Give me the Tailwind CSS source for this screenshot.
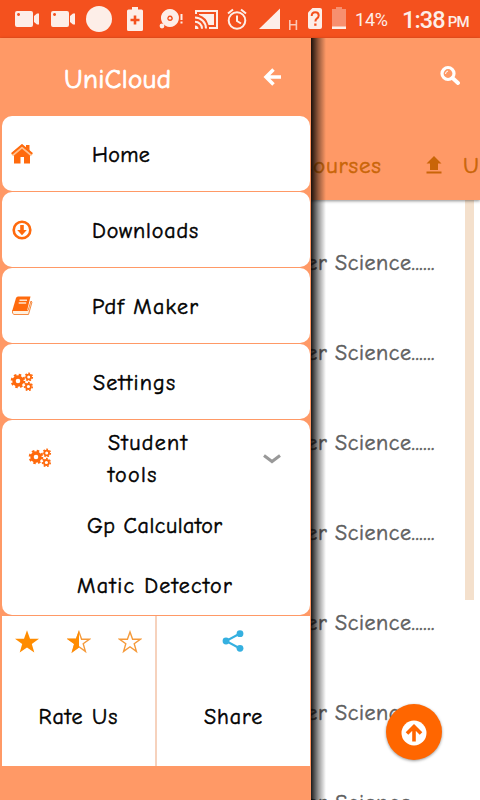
<!DOCTYPE html>
<html lang="en">
<head>
<meta charset="utf-8">
<title>UniCloud</title>
<script src="https://cdn.jsdelivr.net/npm/@tailwindcss/browser@4"></script>
</head>
<body class="relative w-[480px] h-[800px] overflow-hidden bg-white font-['Comic_Sans_MS','Comic_Neue',Lato,sans-serif] [font-variant-ligatures:none]">
<svg class="hidden">
  <defs>
    <symbol id="cam" viewBox="0 0 24 16"><path fill-rule="evenodd" d="M2 0H16Q18 0 18 2V14Q18 16 16 16H2Q0 16 0 14V2Q0 0 2 0ZM3.500 2a1.500 1.500 0 1 0 .1 0ZM19 5l3-2.500h2v11h-2L19 11Z"/></symbol>
    <symbol id="gears" viewBox="0 0 24 20">
      <g fill="none" stroke="#ff6a0d">
        <circle cx="8" cy="9" r="4" stroke-width="3.400"/>
        <circle cx="8" cy="9" r="6.200" stroke-width="2.200" stroke-dasharray="2.500 2.370"/>
        <circle cx="18.700" cy="5" r="2.400" stroke-width="1.800"/>
        <circle cx="18.700" cy="5" r="3.700" stroke-width="1.400" stroke-dasharray="1.700 1.621"/>
        <circle cx="18.400" cy="14.500" r="2.500" stroke-width="1.800"/>
        <circle cx="18.400" cy="14.500" r="3.900" stroke-width="1.500" stroke-dasharray="1.800 1.700"/>
      </g>
    </symbol>
  </defs>
</svg>
<div class="flex h-full flex-col">
  <header class="flex h-[38px] shrink-0 items-center bg-[#f4511e] text-[#fdeee8] font-[Roboto,sans-serif]">
    <svg class="h-[38px] w-[352px] shrink-0" viewBox="0 0 352 38" fill="#fdeee8">
      <use href="#cam" x="15" y="11" width="24" height="16"/>
      <use href="#cam" x="51" y="11" width="24" height="16"/>
      <circle cx="99" cy="19" r="13"/>
      <path fill-rule="evenodd" d="M132 7h6v2.500h3.500q1.500 0 1.500 1.500v18.500q0 1.500-1.500 1.500h-13q-1.500 0-1.500-1.500V11q0-1.500 1.500-1.500h3.500ZM133.700 15.500v3.200h-3.200v2.600h3.200v3.200h2.600v-3.200h3.200v-2.600h-3.200v-3.200Z"/>
      <path fill-rule="evenodd" d="M170 9a9 9 0 1 1-.1 0ZM170 15.500a2.800 2.800 0 1 0 .1 0Z"/>
      <circle cx="170" cy="18.300" r="1.300"/><circle cx="162" cy="26" r="2.400"/>
      <path d="M180.500 14h2v6h-2ZM180.500 21.500h2v2h-2Z"/>
      <g fill="none" stroke="#fdeee8" stroke-width="2">
        <path d="M196 14V11h21v17h-8M195 17.500a11 11 0 0 1 11 11M195 21.700a7 7 0 0 1 7 7"/>
      </g>
      <path d="M199 14h15v11h-5.500A14 14 0 0 0 199 15ZM195 25.500a3.500 3.500 0 0 1 3.500 3.500H195Z"/>
      <g fill="none" stroke="#fdeee8" stroke-width="2">
        <circle cx="237" cy="20.500" r="8.300"/><path d="M237 15.500v5.500l4 2.500M228 13.500l5-4M246 13.500l-5-4"/>
      </g>
      <path d="M280 8.500V29H259Z"/>
      <path d="M289 20h1.600v4h5v-4h1.600v10h-1.600v-4.500h-5V30H289Z" opacity=".75"/>
      <path d="M312.500 8H320q2 0 2 2v17q0 2-2 2h-10q-2 0-2-2V12.500Z"/>
      <path d="M311.700 16q0-3.700 3.500-3.700t3.500 3.300q0 1.700-1.900 3-1.400 1-1.400 3" fill="none" stroke="#f4511e" stroke-width="2"/>
      <path d="M314.200 23.500h2.300v2.300h-2.300Z" fill="#f4511e"/>
      <path d="M336 7h6v2h4v18h-14V9h4Z" opacity=".4"/><path d="M332 26.500h14V29h-14Z"/>
    </svg>
    <span class="ml-[3px] w-[34px] pt-[2px] text-[18px] leading-none tracking-[-0.200px]">14%</span>
    <span class="ml-[13px] pt-[3px] text-[23.500px] font-medium leading-none tracking-[-0.900px]">1:38</span>
    <span class="ml-[3px] pt-[7px] text-[15px] font-medium leading-none tracking-[-0.700px]">PM</span>
  </header>
  <section class="z-10 flex h-[162px] shrink-0 flex-col justify-between bg-[#ff9966] pb-[18px] shadow-[0_1px_3px_rgba(0,0,0,0.45)]">
    <div class="flex justify-end pr-[20px] pt-[27px]">
      <svg class="size-[20px]" viewBox="0 0 20 20" fill="none" stroke="#fff"><circle cx="8" cy="8.500" r="6" stroke-width="3.200"/><path d="M12.500 13l5.500 5" stroke-width="3.800" stroke-linecap="round"/><path d="M5.500 9q0-2.500 2.500-3" stroke-width="1"/></svg>
    </div>
    <div class="flex h-[32px] items-center overflow-hidden pl-[298px] text-[23px] text-[#c96508] [-webkit-text-stroke:0.5px_currentColor]">
      <span class="w-[128px] shrink-0 whitespace-nowrap tracking-[0.850px]">Courses</span>
      <svg class="mb-[2px] h-[18px] w-[16px] shrink-0" viewBox="0 0 16 18" fill="#c96508"><path d="M8 0l7.500 7.500H12V14H4V7.500H.5ZM.5 15.500h15v2H.5Z"/></svg>
      <span class="ml-[21px] whitespace-nowrap tracking-[1px]">Upload</span>
    </div>
  </section>
  <main class="flex h-[600px] justify-end overflow-hidden bg-white">
    <ul class="flex flex-col pt-[18px] text-right text-[22px] leading-[90px] tracking-[0.550px] text-[#5e5e5e] whitespace-nowrap [-webkit-text-stroke:0.5px_currentColor]">
      <li class="h-[90px]">Computer Science......</li>
      <li class="h-[90px]">Computer Science......</li>
      <li class="h-[90px]">Computer Science......</li>
      <li class="h-[90px]">Computer Science......</li>
      <li class="h-[90px]">Computer Science......</li>
      <li class="h-[90px]">Computer Science......</li>
      <li class="h-[90px]">Computer Science......</li>
    </ul>
    <div class="ml-[30px] mr-[6px] h-[400px] w-[9px] shrink-0 bg-[#f4e0cc]"></div>
  </main>
</div>

<button class="absolute left-[386px] top-[704px] z-10 flex size-[56px] items-center justify-center rounded-full bg-[#ff6600] shadow-[0_1px_3px_rgba(0,0,0,0.4)]">
  <svg class="mt-[2px] size-[26px]" viewBox="0 0 26 26"><circle cx="13" cy="13" r="12.500" fill="#fff"/><path d="M13 21.500V7M6 13.500L13 6.500L20 13.500" fill="none" stroke="#ff6600" stroke-width="3.600"/></svg>
</button>

<div class="absolute left-[311px] top-[38px] z-20 h-[762px] w-[15px] bg-linear-to-r from-black/90 via-black/40 to-transparent"></div>
<aside class="absolute left-0 top-[38px] z-20 flex h-[762px] w-[311px] flex-col bg-[#ff9966] pl-[2px] pr-[1px] text-[22px] text-black [-webkit-text-stroke:0.5px_currentColor]">
  <div class="flex h-[78px] shrink-0 items-center text-white">
    <h1 class="ml-[62px] mt-[5px] w-[199px] text-[27px] leading-none tracking-[0.350px] [-webkit-text-stroke:0.8px_currentColor]">UniCloud</h1>
    <svg class="h-[18px] w-[19px]" viewBox="0 0 19 18" fill="none" stroke="#fff" stroke-width="3.500"><path d="M18 9H3.500M10.500 1.500L3 9L10.500 16.500"/></svg>
  </div>
  <nav class="flex flex-col gap-px">
    <a class="flex h-[75px] items-center rounded-[10px] bg-white pl-[9px]">
      <svg class="h-[20px] w-[22px]" viewBox="0 0 22 20"><path d="M15 1h3.500v6H15Z" fill="#ff6a0d"/><path d="M3 10.500L11 3.500L19 10.500V19.500H13V13H9.500V19.500H3Z" fill="#ff6a0d"/><path d="M1 11L11 2.500L21 11" fill="none" stroke="#ffc08f" stroke-width="3.600"/><path d="M.8 9.700L11 1.200L21.200 9.700" fill="none" stroke="#ff6a0d" stroke-width="2"/></svg>
      <span class="ml-[59px] pt-[3px] tracking-[0.300px]">Home</span>
    </a>
    <a class="flex h-[75px] items-center rounded-[10px] bg-white pl-[9px]">
      <svg class="h-[20px] w-[22px]" viewBox="0 0 22 20"><circle cx="11" cy="10" r="8.300" fill="none" stroke="#ff6a0d" stroke-width="2.600"/><path d="M9.200 5h3.600v5h3L11 15.200L6.200 10h3Z" fill="#ff6a0d"/></svg>
      <span class="ml-[59px] pt-[3px] tracking-[0.850px]">Downloads</span>
    </a>
    <a class="flex h-[75px] items-center rounded-[10px] bg-white pl-[9px]">
      <svg class="h-[20px] w-[22px]" viewBox="0 0 22 20"><path d="M1.500 14.500L17 14.500L20 5L21 6L17.500 18.500H3Q.8 18 1.500 14.500Z" fill="#fff0df" stroke="#f58a42" stroke-width="1"/><path d="M7 .5H19.500L16 15H1.200L5 2Q5.500.5 7 .5Z" fill="#ff6a0d"/><path d="M8.500 4.300h7.500M7.700 7h7.500" stroke="#ffe3cc" stroke-width="1.500"/></svg>
      <span class="ml-[59px] pt-[3px] tracking-[1.200px]">Pdf Maker</span>
    </a>
    <a class="flex h-[75px] items-center rounded-[10px] bg-white pl-[8px]">
      <svg class="h-[20px] w-[24px]"><use href="#gears" width="24" height="20"/></svg>
      <span class="ml-[59px] pt-[3px] tracking-[1.200px]">Settings</span>
    </a>
    <div class="flex h-[195px] flex-col rounded-[10px] bg-white">
      <div class="flex h-[75px] items-center pl-[26px]">
        <svg class="h-[20px] w-[24px]"><use href="#gears" width="24" height="20"/></svg>
        <span class="ml-[56px] mt-[3px] w-[155px] leading-[32px] tracking-[1.350px]">Student<br>tools</span>
        <svg class="mt-[2px] h-[10px] w-[18px]" viewBox="0 0 18 10" fill="none" stroke="#999" stroke-width="3"><path d="M1 1.500L9 7.500L17 1.500"/></svg>
      </div>
      <a class="h-[60px] pl-[85px] leading-[62px] tracking-[0.550px]">Gp Calculator</a>
      <a class="h-[60px] pl-[75px] leading-[62px] tracking-[1.350px]">Matic Detector</a>
    </div>
  </nav>
  <div class="mt-px flex h-[150px] gap-[2px] bg-[#f6d2bd]">
    <a class="flex w-[153px] flex-col bg-white">
      <div class="flex justify-between px-[13px] pt-[14px]">
        <svg class="size-[24px]" viewBox="0 0 24 24"><path d="M12 .3L15 8.800H24L16.800 14L19.300 22.600L12 17.500L4.700 22.600L7.200 14L0 8.800H9Z" fill="#ff8c00"/></svg>
        <svg class="size-[24px]" viewBox="0 0 24 24"><path d="M12 2L14.600 9.300H22.300L16.200 13.800L18.400 21.400L12 16.800L5.600 21.400L7.800 13.800L1.700 9.300H9.400Z" fill="none" stroke="#f59a3a" stroke-width="1.400"/><path d="M12 .3V17.500L4.700 22.600L7.200 14L0 8.800H9Z" fill="#ff8c00"/></svg>
        <svg class="size-[24px]" viewBox="0 0 24 24"><path d="M12 2L14.600 9.300H22.300L16.200 13.800L18.400 21.400L12 16.800L5.600 21.400L7.800 13.800L1.700 9.300H9.400Z" fill="none" stroke="#f59a3a" stroke-width="1.400"/></svg>
      </div>
      <span class="mt-[47px] text-center tracking-[1.050px]">Rate Us</span>
    </a>
    <a class="flex flex-1 flex-col items-center bg-white">
      <svg class="mr-[2px] mt-[14px] h-[22px] w-[22px]" viewBox="0 0 22 22" fill="#35b0e0"><path d="M18 3.500L4 11L18 18.500" fill="none" stroke="#35b0e0" stroke-width="2"/><circle cx="4" cy="11" r="3.400"/><circle cx="18" cy="3.700" r="3.400"/><circle cx="18" cy="18.300" r="3.400"/></svg>
      <span class="mt-[49px] tracking-[0.900px]">Share</span>
    </a>
  </div>
</aside>
</body>
</html>
